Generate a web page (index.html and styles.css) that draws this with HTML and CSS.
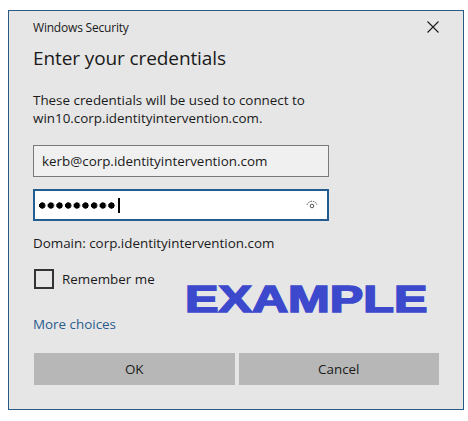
FILE: index.html
```html
<!DOCTYPE html>
<html>
<head>
<meta charset="utf-8">
<link rel="stylesheet" href="styles.css">
</head>
<body>
<div class="dialog">
  <div class="titlebar">
    <span class="app">Windows Security</span>
    <svg class="close" width="12" height="12" viewBox="0 0 12 12"><path d="M0.5 0.5 L11.5 11.5 M11.5 0.5 L0.5 11.5" stroke="#1a1a1a" stroke-width="1.1" fill="none"/></svg>
  </div>
  <h1 class="heading">Enter your credentials</h1>
  <p class="desc">These credentials will be used to connect to<br>win10.corp.identityintervention.com.</p>
  <div class="field user">kerb@corp.identityintervention.com</div>
  <div class="field pass">
    <span class="dots" aria-label="password"></span><span class="caret"></span>
    <svg class="eye" width="12" height="9" viewBox="0 0 12 9"><path d="M1 5 A5.2 5.2 0 0 1 11 5" stroke="#555" stroke-width="1" fill="none" stroke-dasharray="1.6 0.9"/><circle cx="6" cy="6" r="1.8" stroke="#555" stroke-width="1" fill="none"/></svg>
  </div>
  <div class="domain">Domain: corp.identityintervention.com</div>
  <label class="remember"><span class="box"></span>Remember me</label>
  <a class="more">More choices</a>
  <div class="buttons">
    <div class="btn">OK</div>
    <div class="btn">Cancel</div>
  </div>
  <div class="stamp">EXAMPLE</div>
</div>
</body>
</html>
```
FILE: styles.css
```css
html, body { margin: 0; padding: 0; background: #ffffff; }
body { font-family: "Open Sans", "Noto Sans", sans-serif; color: #000; }
.dialog {
  position: relative;
  box-sizing: border-box;
  margin: 10px 0 0 8px;
  width: 456px;
  height: 400px;
  background: #e6e6e6;
  border: 1px solid #2b5b84;
  padding: 0 24px 0 24px;
  display: flex;
  flex-direction: column;
}
.titlebar {
  display: flex;
  align-items: center;
  justify-content: space-between;
  height: 32px;
}
.app { font-size: 12px; color: #1a1a1a; letter-spacing: -0.2px; }
.heading {
  margin: 2px 0 0 0;
  font-weight: 400;
  font-size: 19px;
  line-height: 26px;
  color: #1a1a1a;
  letter-spacing: -0.1px;
}
.desc {
  margin: 20px 0 0 0;
  font-size: 13.4px;
  line-height: 18px;
  color: #1a1a1a;
}
.field {
  box-sizing: border-box;
  width: 296px;
  height: 32px;
  font-size: 13.4px;
  display: flex;
  align-items: center;
  padding-left: 8px;
  color: #1a1a1a;
}
.user {
  margin-top: 18px;
  background: #f0f0f0;
  border: 1px solid #7a7a7a;
}
.pass {
  margin-top: 12px;
  background: #ffffff;
  border: 2px solid #235d8f;
  padding-left: 4px;
  position: relative;
}
.dots {
  display: inline-block;
  width: 78px;
  height: 7px;
  background-image: radial-gradient(circle at 3.2px 3.5px, #000 2.9px, transparent 3.4px);
  background-size: 8.67px 7px;
  background-repeat: repeat-x;
}
.caret { display: inline-block; width: 1.5px; height: 15px; background: #000; margin-left: 1px; }
.eye { position: absolute; right: 9px; top: 9px; }
.domain {
  margin-top: 13px;
  font-size: 13.4px;
  line-height: 18px;
  color: #1a1a1a;
}
.remember {
  margin-top: 17px;
  display: flex;
  align-items: center;
  font-size: 13.4px;
  color: #1a1a1a;
}
.box {
  box-sizing: border-box;
  width: 20px;
  height: 20px;
  border: 2px solid #333333;
  margin-right: 8px;
  margin-left: 1px;
}
.more {
  margin-top: 26px;
  font-size: 13.4px;
  line-height: 18px;
  color: #2a5d8c;
}
.buttons {
  margin-top: 20px;
  display: flex;
  gap: 4px;
  padding-left: 1px;
}
.btn {
  width: 201px;
  height: 32px;
  background: #b7b7b7;
  display: flex;
  align-items: center;
  justify-content: center;
  font-size: 13.4px;
  color: #1a1a1a;
}
.stamp {
  position: absolute;
  left: 176px;
  top: 270px;
  font-family: "Liberation Sans", Arial, sans-serif;
  font-weight: 700;
  font-size: 37px;
  line-height: 38px;
  color: #3d49cc;
  -webkit-text-stroke: 1.6px #3d49cc;
  transform: scaleX(1.355);
  transform-origin: left top;
}
```
